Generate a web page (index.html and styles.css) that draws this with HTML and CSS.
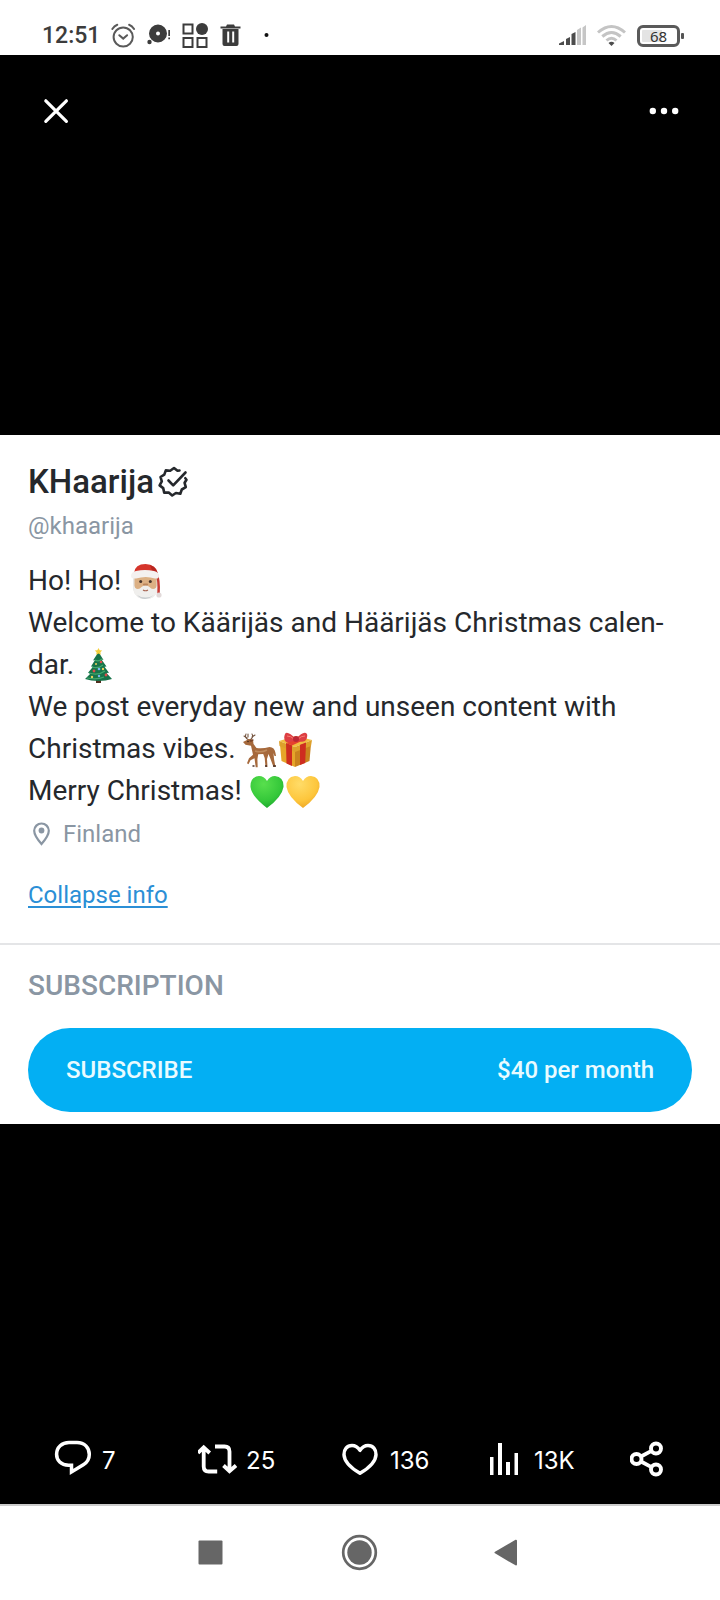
FILE: index.html
```html
<!DOCTYPE html>
<html lang="en">
<head>
<meta charset="utf-8">
<meta name="viewport" content="width=device-width, initial-scale=1">
<title>KHaarija</title>
<link rel="stylesheet" href="styles.css">
</head>
<body>
<header class="status">
  <span class="time">12:51</span>
  <svg class="status-icon" viewBox="0 0 26 26" aria-hidden="true"><g fill="none" stroke="#5a5a5a" stroke-width="2" stroke-linecap="round"><circle cx="13.200" cy="14" r="9.600"/><path d="M9.300 12.200l3.900 3.400 3.900-3.400M2.300 6c1.300-2 3-3.500 5-4.200M24.100 6c-1.300-2-3-3.500-5-4.200"/></g></svg>
  <svg class="status-icon" viewBox="0 0 26 26" aria-hidden="true"><g fill="#3c3c3c"><path fill-rule="evenodd" d="M12 1.500a9 9 0 1 1 0 18 9 9 0 0 1 0-18zm0 7a2 2 0 1 0 0 4 2 2 0 0 0 0-4z"/><circle cx="3.500" cy="19" r="2.200"/><path d="M22.300 7h1.700v6h-1.700zM22.300 14.500h1.700v1.700h-1.700z"/></g></svg>
  <svg class="status-icon" viewBox="0 0 26 26" aria-hidden="true"><g fill="none" stroke="#3c3c3c" stroke-width="2"><path d="M1.500 1.500h9v9h-9zM1.500 15h9v9h-9zM15.500 15h9v9h-9z"/></g><circle cx="20" cy="6" r="6" fill="#3c3c3c"/></svg>
  <svg class="status-icon" viewBox="0 0 26 26" aria-hidden="true"><path fill="#3c3c3c" fill-rule="evenodd" d="M2.500 3.500H8l1-2h7l1 2h5.500v2h-20zM4.500 6h16v15q0 2-2 2h-12q-2 0-2-2zm4.700 2.500v11h2v-11zm5 0v11h2v-11z"/></svg>
  <svg class="status-icon" viewBox="0 0 26 26" aria-hidden="true"><circle cx="12.500" cy="12" r="2" fill="#111"/></svg>
  <div class="status-end">
    <svg class="signal" viewBox="0 0 28 26" aria-hidden="true"><path fill="#4c4c4c" d="M0 22v-1.500l5-2.500v4zM7 22v-6l4-2v8zM12.500 22V11l4-2v13z"/><path fill="#c6c6c6" d="M18 22V7l4-2.500V22zM23.500 22V4.500l3.500-2.500V22z"/></svg>
    <svg class="wifi" viewBox="0 0 30 26" aria-hidden="true"><g fill="none" stroke="#c4c4c4" stroke-width="3"><path d="M1 9.500q13.500-12 27 0M5.300 13.500q9.200-8 18.400 0M9.500 17.500q5-4.500 10 0"/></g><path fill="#4c4c4c" d="M11.500 20q3-2.500 6 0l-3 3z"/></svg>
    <span class="battery">68</span>
  </div>
</header>

<main class="viewer">
  <div class="toolbar">
    <button class="tool" type="button" aria-label="Close"><svg viewBox="0 0 48 48"><path d="M13.800 13.800l20.600 20.600M34.400 13.800L13.800 34.400" stroke="#fff" stroke-width="3.200" stroke-linecap="round"/></svg></button>
    <button class="tool" type="button" aria-label="More"><svg viewBox="0 0 48 48" fill="#fff"><circle cx="12.800" cy="24" r="3.200"/><circle cx="24" cy="24" r="3.200"/><circle cx="35.200" cy="24" r="3.200"/></svg></button>
  </div>

  <article class="card">
    <section class="profile">
      <h1 class="name">KHaarija<svg class="verified" viewBox="0 0 32 32" role="img" aria-label="Verified"><g fill="none" stroke="#25282c" stroke-width="2.600" stroke-linejoin="round" stroke-linecap="round"><path d="M22.500 4.500l-2 .3-3.500-2.800-3.800 2.700-4.400-.3-1.500 4.200-3.800 2.400 1.300 4.400-2.200 4 3.600 2.700 1 4.500 4.500 0 3.500 2.900 3.700-2.500 4.400.8 1.500-4.300 4-2.300-1.200-4.400 1.900-3.100-1.200-1.500"/><path d="M11.500 14.500l4.700 4.800L28.500 6.500"/></g></svg></h1>
      <p class="handle">@khaarija</p>
      <p class="bio">Ho! Ho! <svg class="emoji" viewBox="0 0 36 36" role="img" aria-label="Santa"><path fill="#e8e6e4" d="M5 14h25v11q-2 10-12.500 10T5 25z"/><path fill="#dcb084" d="M6.500 12h22v12q-2 6-11 6t-11-6z"/><path fill="#f0efed" d="M5.500 20q1 5 4.500 5 2 0 3.500-2 4-3.500 8 0 1.500 2 3.500 2 3.500 0 4.500-5v6q-1.500 9-12 9t-12-9z"/><path fill="#c9cdd0" d="M9 31q4 4.500 8.500 4t8.500-4q-4 2.500-8.500 2.500T9 31z"/><path fill="none" stroke="#c73a33" stroke-width="2.500" d="M28 8q3.500 8 2.500 22"/><path fill="#d5352b" d="M6 9Q7 0 17.500 0T30 11z"/><path fill="#b8251f" d="M22 1q7 2 8 10l-5-2z"/><path fill="#f4f1f0" d="M3 12q0-4 5-5 9-2 18 0 5 1 5 5 0 3-4 2.500-9-3-19 0Q3 15 3 12z"/><circle cx="31" cy="31" r="2.600" fill="#e1d9d9"/><circle cx="12.700" cy="17.500" r="1.500" fill="#47342c"/><circle cx="22.300" cy="17.500" r="1.500" fill="#47342c"/><path d="M16 20.500h3" stroke="#bc855c" stroke-width="2.200" stroke-linecap="round"/><path d="M15 26q2.500 1.500 5 0" stroke="#a96654" stroke-width="1.200" fill="none"/></svg><br>Welcome to Käärijäs and Häärijäs Christmas calen&shy;dar. <svg class="emoji" viewBox="0 0 36 36" role="img" aria-label="Christmas tree"><path fill="#50301f" d="M15 29h5v6h-5z"/><path fill="#17734a" d="M17.500 4l5 8-2-.5 5 7-2 .2 4.500 6-2.500.3L31 31q-6 2-13.500 2T4 31l5.500-5.500-2.500-.8 5-6-2-.2 4-6.500-2 .5z"/><path fill="none" stroke="#42a96d" stroke-width="1.200" d="M14 12q4 2 7-1M11 19q6 2 11-2M8 25q9 3 16-2M6 30q10 2 17-1"/><path fill="#f5cf3b" d="M17.500 0l1.200 2.200 2.500.3-1.800 1.800.4 2.500-2.300-1.200-2.300 1.200.4-2.500-1.800-1.800 2.500-.3z"/><g fill="#de4d4b"><circle cx="20" cy="14" r="1.300"/><circle cx="13" cy="23" r="1.400"/><circle cx="25" cy="27" r="1.400"/></g><g fill="#ecd15d"><circle cx="15" cy="16" r="1"/><circle cx="22" cy="21" r="1.200"/><circle cx="11" cy="29" r="1.200"/></g><g fill="#78b8ed"><circle cx="18" cy="21" r="1.300"/><circle cx="18" cy="28" r="1.200"/></g></svg><br>We post everyday new and unseen content with Christmas vibes. <svg class="emoji" viewBox="0 0 36 36" role="img" aria-label="Deer"><path fill="none" stroke="#74543f" stroke-width="1.100" stroke-linecap="round" d="M7 8Q2 6 4 2M5 6L2 4M8 8q4-3 2-6M10 5l3-2M6 5V2"/><path fill="#a6693c" d="M1 10l6-3 4 1 .5 4 3 4q6 1 13-1 5 0 6 6l.5 3-1.500 0-1-3 .5 6 1.500 8h-2l-3-8-2-5-1.500 5 .5 8h-2l-.8-9-1.500-4-5 .2-.8 5 .3 8h-2l-1.200-9-4 2-2 4-1.500-1 2-5 4-3.500-2-9-5.500-1z"/><path fill="#794529" d="M7 9q3-3 5-1l-3 2z"/><circle cx="6" cy="9.500" r=".7" fill="#271812"/><path d="M13 19q6 2 12-1" stroke="#bf8b5d" stroke-width="1.500" fill="none"/><path d="M10.500 34h2M23 34h2M31 34h3" stroke="#4a3126" stroke-width="1.500"/></svg><svg class="emoji" viewBox="0 0 36 36" role="img" aria-label="Gift"><path fill="#e6a529" d="M2 13l15 5v17L3.500 29z"/><path fill="#c9831e" d="M17 18l16-6-1.500 17L17 35z"/><path fill="#f2bd3f" d="M1 9L18 4l16 4-17 7z"/><path fill="#dda02b" d="M1 9l16 6v5L1.500 14zM34 8l-17 7v5l16-6z"/><path fill="#ce2d20" d="M8 11l6 2.300V34l-5.500-2.500zM22 12.800l6-2.400-.8 20.600-5.200 2z"/><path fill="#e5412f" d="M8 11l15-6 5 2-14 6.500z"/><path fill="#dd3f43" d="M18 7Q9-2 7 2q-2 5 1 8 6 1 10-3zM18 7q8-9 11-5 1 4-2 7-5 2-9-2z"/><path d="M9 4q4 0 7 3M27 4q-4 0-7 3" stroke="#f77b72" fill="none"/><circle cx="18" cy="7" r="3" fill="#bb2736"/></svg><br>Merry Christmas! <svg class="emoji" viewBox="0 0 36 36" role="img" aria-label="Green heart"><defs><radialGradient id="green" cx=".4" cy=".25" r=".8"><stop offset="0" stop-color="#58df4d"/><stop offset=".65" stop-color="#35c83a"/><stop offset="1" stop-color="#1ba52d"/></radialGradient></defs><path fill="url(#green)" d="M18 7Q15 2 10 2 1 3 1.500 13 3 23 18 34 33 23 34.500 13 35 3 26 2q-5 0-8 5z"/></svg><svg class="emoji" viewBox="0 0 36 36" role="img" aria-label="Yellow heart"><defs><radialGradient id="yellow" cx=".4" cy=".25" r=".8"><stop offset="0" stop-color="#ffdc68"/><stop offset=".65" stop-color="#fdc63c"/><stop offset="1" stop-color="#eda423"/></radialGradient></defs><path fill="url(#yellow)" d="M18 7Q15 2 10 2 1 3 1.500 13 3 23 18 34 33 23 34.500 13 35 3 26 2q-5 0-8 5z"/></svg></p>
      <p class="place"><svg class="pin" viewBox="0 0 26 26" aria-hidden="true"><path d="M13.500 2.500a7.300 7.300 0 0 0-7.300 7.300c0 5 7.300 13.200 7.300 13.200s7.300-8.200 7.300-13.200a7.300 7.300 0 0 0-7.300-7.300z" fill="none" stroke="#8a96a3" stroke-width="2.200"/><circle cx="13.500" cy="9.500" r="2.900" fill="#8a96a3"/></svg>Finland</p>
      <a class="collapse" href="#">Collapse info</a>
    </section>
    <section class="subscription">
      <h2 class="heading">SUBSCRIPTION</h2>
      <button class="subscribe" type="button"><span>SUBSCRIBE</span><span>$40 per month</span></button>
    </section>
  </article>

  <div class="actions">
    <button class="action" type="button" aria-label="Reply 7"><svg viewBox="0 0 40 40"><path d="M15 4.500h8c7.500 0 12.300 5 12.300 12 0 4.500-2.300 8-6 10.300L17.500 34v-6.800H14.500C7 27.200 2.600 22.500 2.600 16.200 2.600 9.200 8 4.500 15 4.500z" fill="none" stroke="#fff" stroke-width="3.500"/></svg><span>7</span></button>
    <button class="action" type="button" aria-label="Repost 25"><svg viewBox="0 0 40 40"><path d="M0 15l5.700-5.700 6 5.700M5.700 10v18.500q0 5 5 5h8.500M17 8.500h9.500q5 0 5 5V32M25.500 27.500l6 5.700 6.500-5.700" fill="none" stroke="#fff" stroke-width="3.800"/></svg><span>25</span></button>
    <button class="action" type="button" aria-label="Like 136"><svg viewBox="0 0 40 40"><path d="M18 12.300C15.800 9 13 7.500 10 7.500c-5 0-8.200 4-8 9.200C2.300 24 9 30 18 35.200 27 30 33.700 24 34 16.700 34.200 11.500 31 7.500 26 7.500c-3 0-5.800 1.500-8 4.800z" fill="none" stroke="#fff" stroke-width="3.500" stroke-linejoin="round"/></svg><span>136</span></button>
    <button class="action" type="button" aria-label="Views 13K"><svg viewBox="0 0 40 40"><path fill="#fff" d="M4 19h3.500v18H4zM12 5h4v32h-4zM20 24h4v13h-4zM28.500 15H32v22h-3.500z"/></svg><span>13K</span></button>
    <button class="action" type="button" aria-label="Share"><svg viewBox="0 0 40 40"><g fill="none" stroke="#fff" stroke-width="3.900"><circle cx="6.500" cy="21" r="5"/><circle cx="26" cy="10.500" r="5"/><circle cx="26" cy="31.500" r="5"/><path d="M11 18.500l10.500-5.600M11 23.500l10.500 5.600"/></g></svg></button>
  </div>
</main>

<nav class="system-nav">
  <button class="nav-key" type="button" aria-label="Recent apps"><svg viewBox="0 0 40 40"><rect x="8.500" y="7.500" width="24" height="24" rx="1" fill="#666"/></svg></button>
  <button class="nav-key" type="button" aria-label="Home"><svg viewBox="0 0 40 40"><circle cx="19.500" cy="19.500" r="16.300" fill="none" stroke="#666" stroke-width="2.700"/><circle cx="19.500" cy="19.500" r="12.200" fill="#666"/></svg></button>
  <button class="nav-key" type="button" aria-label="Back"><svg viewBox="0 0 40 40"><path d="M5.500 19.500L26 7.700v23.800z" fill="#666" stroke="#666" stroke-width="2" stroke-linejoin="round"/></svg></button>
</nav>
</body>
</html>
```

FILE: styles.css
```css
* { box-sizing: border-box; }

body {
  margin: 0;
  min-height: 100vh;
  display: flex;
  flex-direction: column;
  background: #fff;
  color: #25282c;
  font-family: Roboto, "Liberation Sans", sans-serif;
}

h1, h2, p { margin: 0; font-weight: 400; }

button {
  padding: 0;
  border: 0;
  background: none;
  color: inherit;
  font: inherit;
  cursor: pointer;
}

svg { display: block; flex: none; }

.status {
  display: flex;
  align-items: center;
  gap: 10px;
  padding: 16px 36px 0 42px;
  height: 55px;
}

.time {
  color: #3c3c3c;
  font-size: 23px;
  font-weight: 500;
  line-height: 26px;
}

.status-icon { width: 26px; height: 26px; }

.status-end {
  display: flex;
  align-items: center;
  gap: 10px;
  margin-left: auto;
}

.signal { width: 28px; height: 26px; }
.wifi { width: 30px; height: 26px; }

.battery {
  position: relative;
  width: 43px;
  height: 22px;
  margin-right: 4px;
  border: 3px solid #5a5a5a;
  border-radius: 6px;
  background: linear-gradient(90deg, #e4e4e4 60%, #fff 60%);
  background-clip: content-box;
  padding: 2px;
  color: #333;
  font: 15px/12px "Noto Sans", sans-serif;
  text-align: center;
}

.battery::after {
  content: "";
  position: absolute;
  top: 5px;
  right: -7px;
  width: 3px;
  height: 6px;
  border-radius: 1px;
  background: #555;
}

.viewer {
  flex: 1;
  display: grid;
  grid-template-rows: 1fr auto 1fr;
  background: #000;
  color: #fff;
}

.toolbar {
  display: flex;
  justify-content: space-between;
  align-items: flex-start;
  padding: 32px;
}

.tool, .tool svg { width: 48px; height: 48px; }

.card { background: #fff; color: #25282c; }

.profile {
  padding: 27px 28px 32px;
  border-bottom: 2px solid #e4e5e7;
}

.name {
  display: flex;
  align-items: center;
  gap: 3px;
  font-size: 33px;
  font-weight: 500;
  line-height: 40px;
}

.verified { width: 32px; height: 32px; }

.handle {
  margin-top: 8px;
  color: #8a96a3;
  font-size: 24px;
  line-height: 32px;
}

.bio {
  margin-top: 18px;
  font-size: 28px;
  line-height: 42px;
}

.emoji {
  display: inline-block;
  width: 36px;
  height: 36px;
  margin: -4px 0;
  vertical-align: -6px;
}

.place {
  display: flex;
  align-items: center;
  gap: 9px;
  margin-top: 6px;
  color: #8a96a3;
  font-size: 24px;
  line-height: 32px;
}

.pin { width: 26px; height: 26px; }

.collapse {
  display: inline-block;
  margin-top: 29px;
  color: #2b8fd6;
  font-size: 24px;
  line-height: 32px;
  text-underline-offset: 3px;
}

.subscription { padding: 23px 28px 12px; }

.heading {
  color: #8a96a3;
  font-size: 28px;
  font-weight: 500;
  line-height: 36px;
}

.subscribe {
  display: flex;
  justify-content: space-between;
  align-items: center;
  width: 100%;
  height: 84px;
  margin-top: 24px;
  padding: 0 38px;
  border-radius: 42px;
  background: #03aff3;
  color: #e9fbff;
  font-size: 24px;
  font-weight: 500;
}

.actions {
  align-self: end;
  display: grid;
  grid-template-columns: repeat(5, 1fr);
  padding-bottom: 26px;
}

.action {
  display: flex;
  align-items: center;
  gap: 8px;
  padding-left: 54px;
  font: 24px/34px Inter, sans-serif;
}

.action span { padding-top: 6px; }

.action svg { width: 40px; height: 40px; }

.system-nav {
  display: grid;
  grid-template-columns: repeat(3, 150px);
  justify-content: center;
  padding: 27px 0;
  border-top: 2px solid #ccc;
}

.nav-key { display: grid; place-items: center; }
.nav-key svg { width: 40px; height: 40px; }
```
